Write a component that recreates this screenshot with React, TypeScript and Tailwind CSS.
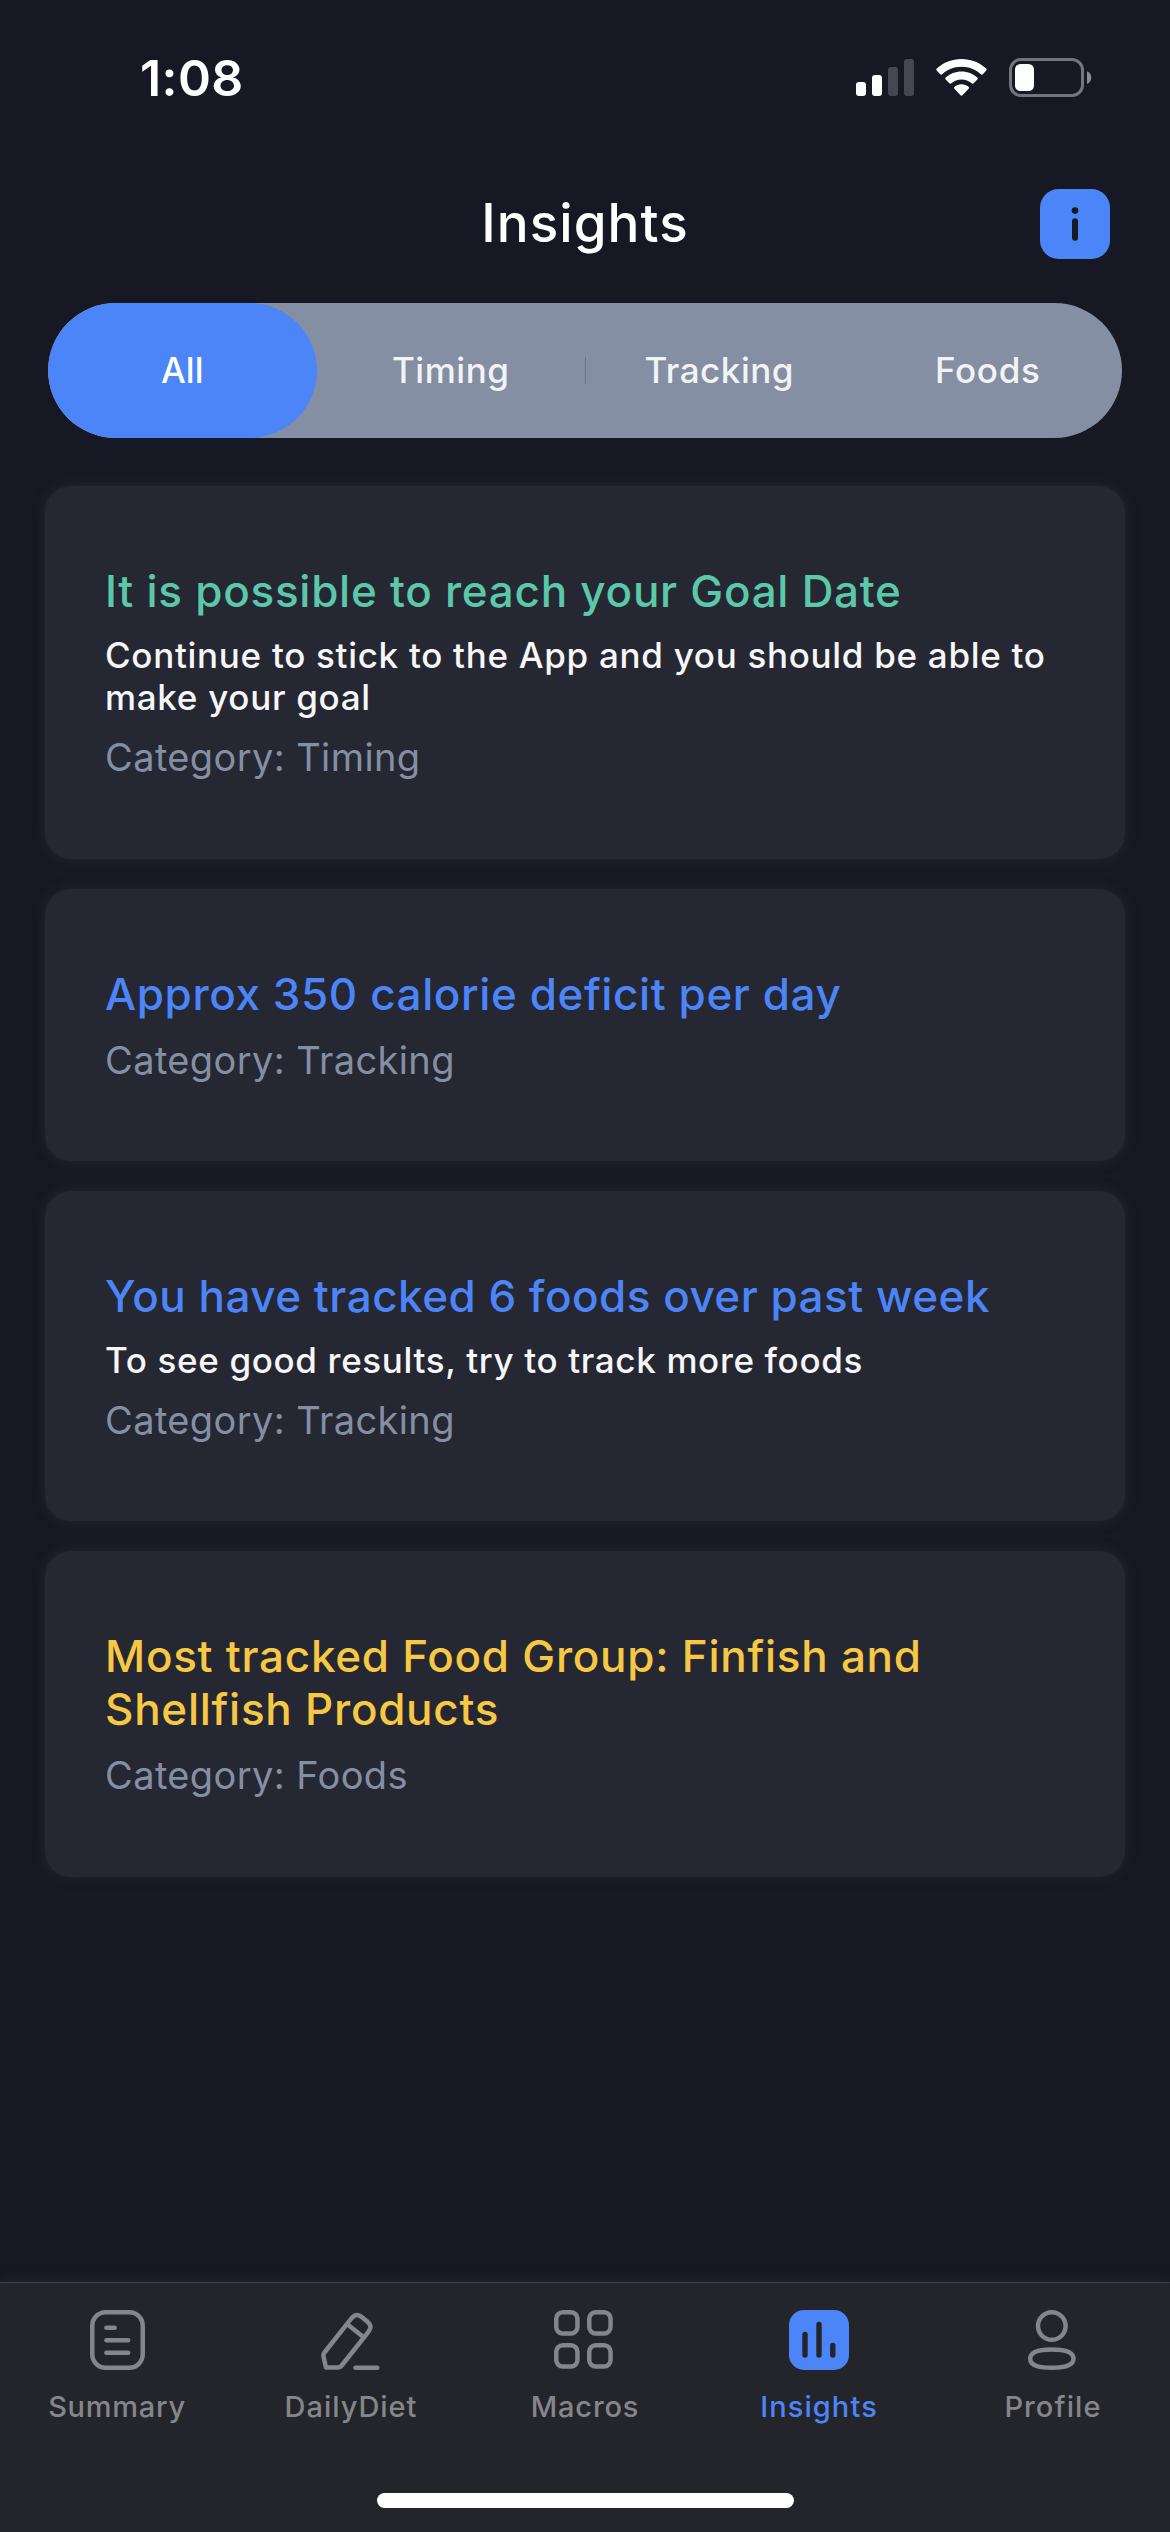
import React from "react";

function StatusIcons() {
  return (
    <svg width="250" height="44" viewBox="0 0 250 44" fill="none">
      <rect x="6" y="26" width="10" height="14" rx="3" fill="#fff" />
      <rect x="22" y="19" width="10" height="21" rx="3" fill="#fff" />
      <rect x="38" y="11" width="10" height="29" rx="3" fill="#454751" />
      <rect x="54" y="3" width="10" height="37" rx="3" fill="#454751" />
      <path d="M111.5 3C121 3 129.600 6.400 136.200 12.600C136.800 13.200 136.800 14 136.300 14.600L132.800 18.200C132.200 18.800 131.400 18.800 130.800 18.200C125.600 13.400 118.900 10.700 111.500 10.700C104.100 10.700 97.400 13.400 92.200 18.200C91.600 18.800 90.800 18.800 90.200 18.200L86.700 14.600C86.200 14 86.200 13.200 86.800 12.600C93.400 6.400 102 3 111.500 3Z" fill="#fff" />
      <path d="M111.500 15.600C117.600 15.600 123.100 17.900 127.300 21.600C127.900 22.200 127.900 23 127.300 23.600L123.700 27.200C123.100 27.800 122.400 27.800 121.700 27.300C118.900 24.900 115.400 23.500 111.500 23.500C107.600 23.500 104.100 24.900 101.300 27.300C100.600 27.800 99.900 27.800 99.300 27.200L95.700 23.600C95.100 23 95.100 22.200 95.700 21.600C99.900 17.900 105.400 15.600 111.500 15.600Z" fill="#fff" />
      <path d="M111.500 28.300C114.200 28.300 116.600 29.200 118.500 30.700C119.200 31.300 119.200 32 118.600 32.700L112.500 39.300C111.900 39.900 111.100 39.900 110.500 39.300L104.400 32.700C103.800 32 103.800 31.300 104.500 30.700C106.400 29.200 108.800 28.300 111.500 28.300Z" fill="#fff" />
      <rect x="160.500" y="3.500" width="72" height="36" rx="10.500" stroke="#73747c" strokeWidth="3" />
      <rect x="165" y="8" width="19" height="27" rx="5.500" fill="#fff" />
      <path d="M237 15.300C239.600 16.400 241.200 18.800 241.200 21.700C241.200 24.500 239.600 26.900 237 28Z" fill="#8b8c92" />
    </svg>
  );
}

function InfoIcon() {
  return (
    <svg width="70" height="70" viewBox="0 0 70 70">
      <rect x="0" y="0" width="70" height="70" rx="18.500" fill="#4b85f8" />
      <circle cx="35" cy="21.600" r="3.300" fill="#161824" />
      <rect x="32" y="29.200" width="6" height="22.600" rx="3" fill="#161824" />
    </svg>
  );
}

const stroke = {
  width: 72,
  height: 72,
  viewBox: "0 0 72 72",
  fill: "none",
  stroke: "currentColor",
  strokeWidth: 4.5,
  strokeLinecap: "round" as const,
  strokeLinejoin: "round" as const,
};

function SummaryIcon() {
  return (
    <svg {...stroke}>
      <rect x="11.250" y="8.250" width="50.500" height="55.500" rx="13.500" />
      <path d="M25.400 23.700H33.700M25.400 36.200H47.200M25.400 48.700H47.200" />
    </svg>
  );
}

function DietIcon() {
  return (
    <svg {...stroke}>
      <path d="M11 63.500H22.600C24.400 63.500 25.700 62.900 26.700 61.500L52.600 28.800C56.600 23.800 56.500 21.300 51.900 17.200L47.100 13.300C43 9.900 39.900 10.300 36.600 14.200L9.500 48.500C8.500 49.800 8.200 51.100 8.500 52.500Z" />
      <path d="M33.600 21.300L47.700 32.400M40.500 63.700H62.300" />
    </svg>
  );
}

function MacrosIcon() {
  return (
    <svg {...stroke}>
      <rect x="7.250" y="8.250" width="21.200" height="21.300" rx="6.500" />
      <rect x="40.250" y="8.250" width="21.300" height="21.300" rx="6.500" />
      <rect x="7.250" y="41.250" width="21.200" height="21.300" rx="6.500" />
      <rect x="40.250" y="41.250" width="21.300" height="21.300" rx="6.500" />
    </svg>
  );
}

function InsightsIcon() {
  return (
    <svg width="72" height="72" viewBox="0 0 72 72">
      <rect x="6" y="6" width="60" height="60" rx="15" fill="currentColor" />
      <path d="M22 30.500V51M36 20.500V51M49.800 41.500V51" stroke="#24252b" strokeWidth="5.400" strokeLinecap="round" />
    </svg>
  );
}

function ProfileIcon() {
  return (
    <svg {...stroke}>
      <circle cx="34.800" cy="22" r="13.800" />
      <path d="M34.800 45.500C45.500 45.500 56.500 46.900 56.500 54.700C56.500 62.400 45.500 63.700 34.800 63.700C24.100 63.700 13.200 62.400 13.200 54.700C13.200 46.900 24.100 45.500 34.800 45.500Z" />
    </svg>
  );
}

const segments = [
  { label: "All", cls: "rounded-full bg-[#4b85f8] text-white" },
  { label: "Timing", cls: "text-[#f2f3f5] tracking-[0.57px]" },
  { label: "Tracking", cls: "text-[#f2f3f5] tracking-[0.51px]" },
  { label: "Foods", cls: "text-[#f2f3f5] tracking-[0.68px]" },
];

const cards = [
  {
    height: "h-[373px]",
    lines: ["It is possible to reach your Goal Date"],
    title: "text-[#5bc8aa] tracking-[0.73px]",
    body: ["Continue to stick to the App and you should be able to", "make your goal"],
    bodyCls: "tracking-[0.7px]",
    category: "Timing",
  },
  {
    height: "h-[272px]",
    lines: ["Approx 350 calorie deficit per day"],
    title: "text-[#4b85f8] tracking-[0.6px]",
    body: [],
    bodyCls: "",
    category: "Tracking",
  },
  {
    height: "h-[330px]",
    lines: ["You have tracked 6 foods over past week"],
    title: "text-[#4b85f8] tracking-[0.5px]",
    body: ["To see good results, try to track more foods"],
    bodyCls: "tracking-[0.65px]",
    category: "Tracking",
  },
  {
    height: "h-[326px]",
    lines: ["Most tracked Food Group: Finfish and", "Shellfish Products"],
    title: "text-[#f7c844] tracking-[0.73px]",
    body: [],
    bodyCls: "",
    category: "Foods",
  },
];

const tabs = [
  { label: "Summary", Icon: SummaryIcon, cls: "text-[#85868b]", text: "tracking-[0.74px]" },
  { label: "DailyDiet", Icon: DietIcon, cls: "text-[#85868b]", text: "tracking-[0.97px]" },
  { label: "Macros", Icon: MacrosIcon, cls: "text-[#85868b]", text: "tracking-[0.83px]" },
  { label: "Insights", Icon: InsightsIcon, cls: "text-[#4b85f8]", text: "tracking-[1.1px]" },
  { label: "Profile", Icon: ProfileIcon, cls: "text-[#85868b]", text: "tracking-[1.09px]" },
];

export default function App() {
  return (
    <div className="flex h-[2532px] w-[1170px] flex-col overflow-hidden bg-[#161824] font-['Inter',sans-serif] text-white">
      <div className="flex h-[156px] shrink-0 items-center justify-between pr-[70px] pl-[140px]">
        <span className="text-[50px] leading-[60px] font-semibold tracking-[0.4px]">1:08</span>
        <StatusIcons />
      </div>

      <header className="grid h-[135px] shrink-0 grid-cols-[1fr_auto_1fr] items-center px-[60px]">
        <span />
        <h1 className="pb-[2px] text-[53px] leading-[64px] font-medium tracking-[1.07px]">Insights</h1>
        <button className="justify-self-end" aria-label="Info">
          <InfoIcon />
        </button>
      </header>

      <div className="relative mx-12 mt-3 grid h-[135px] shrink-0 grid-cols-4 overflow-hidden rounded-full bg-[#858fa3]">
        {segments.map((s) => (
          <button key={s.label} className={`flex items-center justify-center text-[35px] font-medium ${s.cls}`}>
            {s.label}
          </button>
        ))}
        <span className="absolute top-[54px] left-[537px] h-[27px] w-px bg-[#6d7688]" />
      </div>

      <main className="mx-[45px] mt-12 flex flex-col gap-[30px]">
        {cards.map((c) => (
          <section
            key={c.lines[0]}
            className={`rounded-[26px] bg-[#252732] px-[60px] pt-[79px] whitespace-nowrap shadow-[0_0_12px_#252732] ${c.height}`}
          >
            <h2 className={`text-[44px] leading-[53px] font-medium ${c.title}`}>
              {c.lines.map((l) => (
                <span key={l} className="block">{l}</span>
              ))}
            </h2>
            {c.body.length > 0 && (
              <p className={`mt-4 text-[35px] leading-[42px] font-medium text-[#f6f6f8] ${c.bodyCls}`}>
                {c.body.map((l) => (
                  <span key={l} className="block">{l}</span>
                ))}
              </p>
            )}
            <p className="mt-[15.5px] text-[38px] leading-[46px] tracking-[0.39px] text-[#858fa3]">
              Category: {c.category}
            </p>
          </section>
        ))}
      </main>

      <nav className="mt-auto flex h-[250px] shrink-0 flex-col items-center border-t border-[#404149] bg-[#24252b] shadow-[0_0_12px_#24252b]">
        <div className="grid w-full grid-cols-5 pt-[21px]">
          {tabs.map(({ label, Icon, cls, text }) => (
            <button key={label} className={`flex flex-col items-center gap-[13px] ${cls}`}>
              <Icon />
              <span className={`text-[29px] leading-9 font-medium ${text}`}>{label}</span>
            </button>
          ))}
        </div>
        <div className="mt-auto mb-6 h-[15px] w-[417px] rounded-full bg-white" />
      </nav>
    </div>
  );
}
